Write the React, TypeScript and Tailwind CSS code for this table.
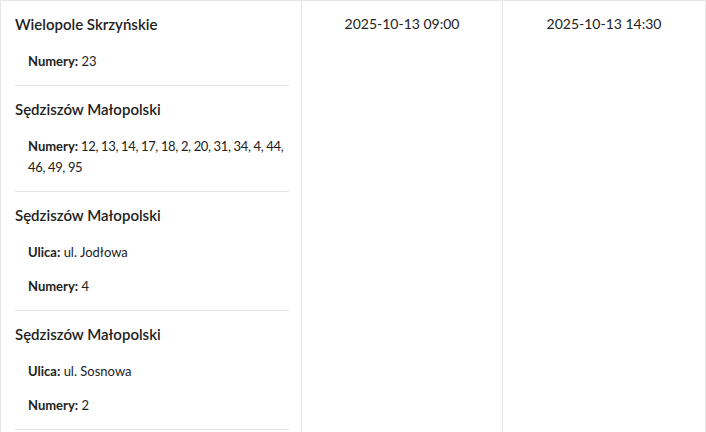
import React from "react";

type Item = { label: string; value: string[] };
type Block = { title: string; items: Item[] };

const blocks: Block[] = [
  { title: "Wielopole Skrzyńskie", items: [{ label: "Numery:", value: ["23"] }] },
  {
    title: "Sędziszów Małopolski",
    items: [{ label: "Numery:", value: ["12, 13, 14, 17, 18, 2, 20, 31, 34, 4, 44,", "46, 49, 95"] }],
  },
  {
    title: "Sędziszów Małopolski",
    items: [
      { label: "Ulica:", value: ["ul. Jodłowa"] },
      { label: "Numery:", value: ["4"] },
    ],
  },
  {
    title: "Sędziszów Małopolski",
    items: [
      { label: "Ulica:", value: ["ul. Sosnowa"] },
      { label: "Numery:", value: ["2"] },
    ],
  },
];

export default function App() {
  return (
    <div
      className="w-[706px] h-[432px] overflow-hidden bg-white text-[#222]"
      style={{ fontFamily: "Lato, 'Open Sans', sans-serif" }}
    >
      <div className="flex border-l border-t border-[#e6e6e6] min-h-[600px]">
        <div className="w-[301px] shrink-0 border-r border-[#e6e6e6] pl-[14px] pr-[12px]">
          {blocks.map((b, i) => (
            <div key={i} className="border-b border-[#e3e3e3] pt-[13px] pb-[13px]">
              <div className="text-[15px] leading-[20px] font-semibold text-[#222]">{b.title}</div>
              <div className="pt-[17px] pl-[13px] flex flex-col gap-[13px]">
                {b.items.map((it, j) => (
                  <div key={j} className="text-[13px] leading-[21px] text-[#222]">
                    {it.value.length > 1 ? (
                      <>
                        <div className="whitespace-nowrap tracking-[-0.35px]">
                          <span className="font-bold tracking-normal">{it.label}</span> {it.value[0]}
                        </div>
                        <div className="tracking-[-0.35px]">{it.value[1]}</div>
                      </>
                    ) : (
                      <>
                        <span className="font-bold">{it.label}</span> {it.value[0]}
                      </>
                    )}
                  </div>
                ))}
              </div>
            </div>
          ))}
        </div>
        <div className="w-[201px] shrink-0 border-r border-[#e6e6e6] pt-[13px] text-center text-[14px] leading-[20px] text-[#222]">
          2025-10-13 09:00
        </div>
        <div className="w-[203px] shrink-0 border-r border-[#e6e6e6] pt-[13px] text-center text-[14px] leading-[20px] text-[#222]">
          2025-10-13 14:30
        </div>
      </div>
    </div>
  );
}
